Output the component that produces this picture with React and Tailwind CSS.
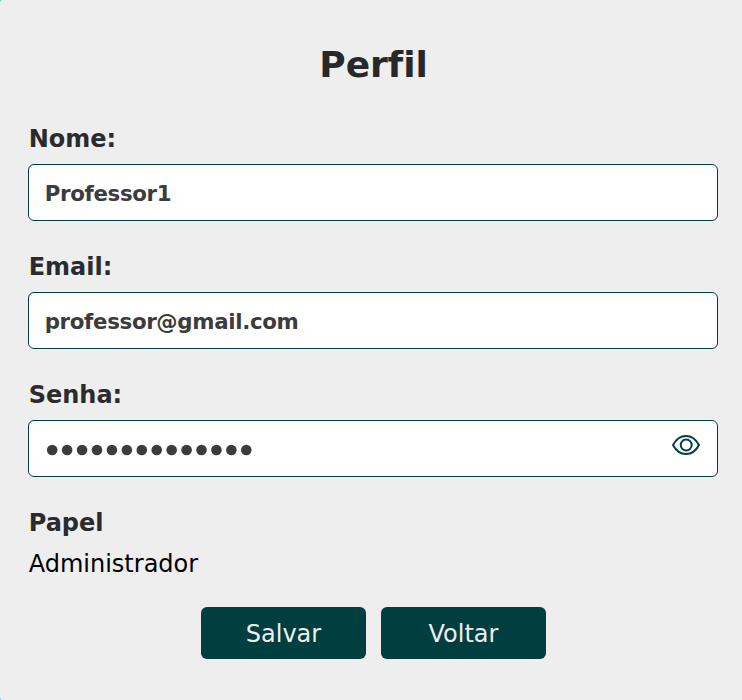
import React from "react";

function Field({ label, children }) {
  return (
    <div className="flex flex-col">
      <label className="h-[30px] pt-px mb-[10px] pl-[0.7px] text-[24px] leading-[29px] font-bold text-[#2b2b2e]">{label}</label>
      <div className="h-[57px] flex items-center justify-between rounded-[6px] border border-[#003e3f] bg-white pl-[15.7px] pr-[17px] text-[21.33px] tracking-[-0.34px] font-bold text-[#3c3c3c]">
        {children}
      </div>
    </div>
  );
}

export default function App() {
  return (
    <main className="w-[742px] h-[700px] overflow-hidden bg-[#20b8bc] [font-family:Verdana,'DejaVu_Sans',sans-serif] [font-variant-ligatures:none]">
      <div className="w-full h-full rounded-l-[2px] bg-[#eeeeee] pl-7 pr-6">
        <h1 className="pt-[42.5px] h-[124px] pl-px text-center text-[36px] leading-[44px] tracking-[-0.1px] font-bold text-[#28282c]">Perfil</h1>
        <div className="flex flex-col gap-[31px]">
          <Field label="Nome:"><span className="pt-[2px]">Professor1</span></Field>
          <Field label="Email:"><span className="pt-[2px]">professor@gmail.com</span></Field>
          <Field label="Senha:">
            <svg className="w-[210px] h-3 mt-[2px]" viewBox="0 0 210 12" fill="#3c3c3c">
              {Array.from({ length: 14 }, (_, i) => (
                <circle key={i} cx={7.2 + i * 14.93} cy="6" r="5.3" />
              ))}
            </svg>
            <svg className="w-7 h-7 -mt-2" viewBox="0 0 28 28" fill="none" stroke="#003e3f" strokeWidth="2" strokeLinejoin="round">
              <path d="M1 14C4 8.3 8.6 5 14 5S24 8.3 27 14C24 19.7 19.4 23 14 23S4 19.7 1 14Z" />
              <circle cx="14.2" cy="14" r="5.5" />
            </svg>
          </Field>
        </div>
        <div className="mt-[32px] pl-[0.7px] text-[24px] leading-[29px]">
          <div className="font-bold text-[#2b2b2e]">Papel</div>
          <div className="mt-[12px] text-black">Administrador</div>
        </div>
        <div className="mt-[28px] flex justify-center gap-[15px]">
          <button className="w-[165px] h-[52px] pt-[2px] pl-px rounded-[6px] bg-[#003e3f] text-[24px] text-[#eeeeee]">Salvar</button>
          <button className="w-[165px] h-[52px] pt-[2px] pl-px rounded-[6px] bg-[#003e3f] text-[24px] text-[#eeeeee]">Voltar</button>
        </div>
      </div>
    </main>
  );
}
